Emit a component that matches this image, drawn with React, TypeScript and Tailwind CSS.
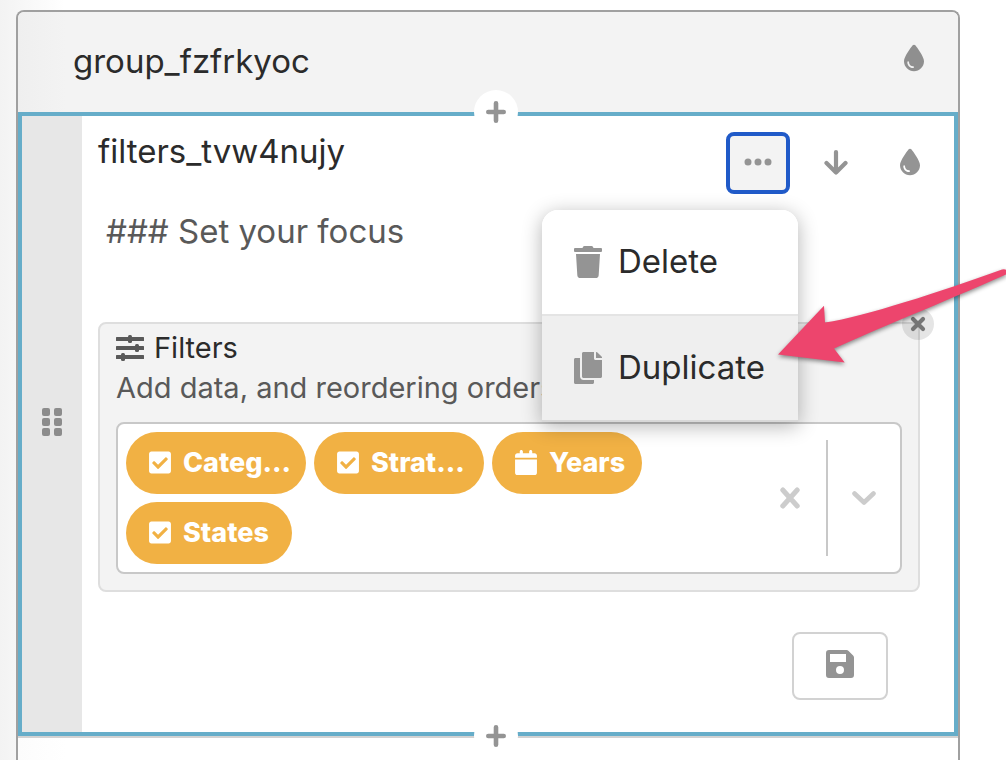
import type { ReactNode } from "react";
import { FaCalendar, FaDroplet, FaEllipsis, FaFloppyDisk } from "react-icons/fa6";
import { FaCheckSquare, FaCopy, FaTrash } from "react-icons/fa";

const tags = [
  { label: "Categ...", kind: "check", width: "w-[180px]" },
  { label: "Strat...", kind: "check", width: "w-[170px]" },
  { label: "Years", kind: "date", width: "w-[150px]" },
  { label: "States", kind: "check", width: "w-[166px]" },
];

function StrokeIcon({ width, height, stroke, d }: { width: number; height: number; stroke: number; d: string }) {
  return (
    <svg
      width={width}
      height={height}
      viewBox={`0 0 ${width} ${height}`}
      fill="none"
      stroke="currentColor"
      strokeWidth={stroke}
      strokeLinecap="round"
      strokeLinejoin="round"
      aria-hidden="true"
    >
      <path d={d} />
    </svg>
  );
}

function SlidersIcon() {
  return (
    <svg width="28" height="26" viewBox="0 0 28 26" fill="#595959" aria-hidden="true">
      <rect x="0" y="2" width="28" height="4" rx="0.5" />
      <rect x="0" y="11" width="28" height="4" rx="0.5" />
      <rect x="0" y="20" width="28" height="4" rx="0.5" />
      <rect x="12" y="0" width="4" height="8" rx="1.5" />
      <rect x="19" y="9" width="4" height="8" rx="1.5" />
      <rect x="5" y="18" width="4" height="8" rx="1.5" />
    </svg>
  );
}

function GripIcon() {
  return (
    <svg width="20" height="28" viewBox="0 0 20 28" fill="#8c8c8c" aria-hidden="true">
      {[0, 10, 20].map((y) => (
        <g key={y}>
          <rect x="0" y={y} width="8" height="8" rx="2" />
          <rect x="12" y={y} width="8" height="8" rx="2" />
        </g>
      ))}
    </svg>
  );
}

function AddButton({ place }: { place: string }) {
  return (
    <button
      type="button"
      aria-label="Add item"
      className={`absolute left-[452px] flex size-11 items-center justify-center rounded-full bg-white text-[#949494] ${place}`}
    >
      <StrokeIcon width={20} height={22} stroke={4.6} d="M10 2.300V19.700M2.300 11H17.700" />
    </button>
  );
}

function MenuItem({ icon, label, className }: { icon: ReactNode; label: string; className: string }) {
  return (
    <button
      type="button"
      role="menuitem"
      className={`flex h-[106px] w-full items-center gap-4 border-b-2 pl-8 text-[#949494] ${className}`}
    >
      {icon}
      <span className="pb-0.5 text-[33px] leading-10 text-[#2b2b2b]">{label}</span>
    </button>
  );
}

export default function App() {
  return (
    <div className="relative flex min-h-screen flex-col overflow-hidden bg-white bg-[linear-gradient(to_right,#f3f3f3,#ffffff_64px)] pt-2.5 font-['Inter',sans-serif] text-[#2b2b2b]">
      <main className="mr-[46px] ml-4 flex grow flex-col rounded-t-lg border-2 border-b-0 border-[#a0a0a0]">
        <header className="flex h-[100px] items-center justify-between rounded-t-md bg-[linear-gradient(to_right,#efefef,#f3f3f3_48px)] pr-[34px] pl-[55px]">
          <h1 className="pb-0.5 text-[33px] leading-10">group_fzfrkyoc</h1>
          <button type="button" aria-label="Group style" className="pb-2 text-[#8f8f8f]">
            <FaDroplet size={28} className="w-5" />
          </button>
        </header>

        <section className="relative flex border-4 border-[#66adc9] bg-white shadow-[0_2px_0_#d2d2d2]">
          <AddButton place="-top-[26px]" />
          <AddButton place="-bottom-[26px]" />
          <button
            type="button"
            aria-label="Drag to reorder"
            className="flex w-[60px] shrink-0 items-center justify-center bg-[#e7e7e7] pb-1"
          >
            <GripIcon />
          </button>

          <div className="min-w-0 grow px-4 pt-4 pb-8">
            <div className="flex items-start justify-between">
              <h2 className="text-[33px] leading-[38px]">filters_tvw4nujy</h2>
              <div className="flex items-center text-[#949494]">
                <div className="relative">
                  <button
                    type="button"
                    aria-label="More actions"
                    aria-haspopup="menu"
                    className="flex h-[62px] w-16 items-center justify-center rounded-lg border-4 border-[#205ac8] bg-[#f3f3f3] pb-0.5"
                  >
                    <FaEllipsis size={32} />
                  </button>
                  <div
                    role="menu"
                    className="absolute top-full -right-2 z-20 mt-4 w-64 rounded-t-2xl bg-white shadow-[0_4px_20px_rgba(0,0,0,0.3)]"
                  >
                    <MenuItem icon={<FaTrash size={32} className="w-7" />} label="Delete" className="rounded-t-2xl border-[#e4e4e4] bg-white" />
                    <MenuItem icon={<FaCopy size={32} className="w-7" />} label="Duplicate" className="border-[#d8d8d8] bg-[#efefef]" />
                  </div>
                </div>
                <button type="button" aria-label="Move down" className="ml-8 flex w-7 justify-center pb-0.5">
                  <StrokeIcon width={24} height={25} stroke={4.2} d="M12 2.100V22.500M2.500 13L12 22.500L21.500 13" />
                </button>
                <button type="button" aria-label="Filter style" className="mr-[18px] ml-[50px] pb-0.5">
                  <FaDroplet size={28} className="w-5" />
                </button>
              </div>
            </div>

            <textarea
              aria-label="Description"
              defaultValue="### Set your focus"
              className="mt-4 block h-28 w-full resize-none bg-transparent px-2 pt-px text-[33px] leading-10 text-[#595959] outline-none"
            />

            <div className="relative mr-[18px] rounded-lg border-2 border-[#dedede] bg-[#f3f3f3] px-4 pt-1 pb-4">
              <button
                type="button"
                aria-label="Remove filters"
                className="absolute -top-4 -right-4 flex size-8 items-center justify-center rounded-full bg-black/10 text-[#757575]"
              >
                <StrokeIcon width={16} height={16} stroke={4.2} d="M3 3L13 13M13 3L3 13" />
              </button>
              <h3 className="flex items-center gap-2.5 text-[29px] leading-10">
                <SlidersIcon />
                Filters
              </h3>
              <p className="text-[29px] leading-10 text-[#595959]">Add data, and reordering orders</p>

              <div className="mt-3.5 flex rounded-lg border-2 border-[#c8c8c8] bg-white">
                <ul className="flex grow flex-wrap gap-2 p-2">
                  {tags.map((tag) => (
                    <li
                      key={tag.label}
                      className={`flex h-[62px] items-center gap-3 rounded-full bg-[#f1b144] pl-[23px] text-[27px] leading-10 font-extrabold text-white ${tag.width}`}
                    >
                      {tag.kind === "check" ? <FaCheckSquare size={25} className="mb-0.5 w-[22px]" /> : <FaCalendar size={25} className="mb-0.5 w-[22px]" />}
                      {tag.label}
                    </li>
                  ))}
                </ul>
                <div className="flex shrink-0 items-stretch text-[#cccccc]">
                  <button type="button" aria-label="Clear all" className="px-[26px]">
                    <StrokeIcon width={20} height={22} stroke={5} d="M2.800 3L17.200 19M17.200 3L2.800 19" />
                  </button>
                  <span className="my-4 w-0.5 bg-[#c8c8c8]" />
                  <button type="button" aria-label="Open options" className="px-6">
                    <StrokeIcon width={24} height={14} stroke={4.6} d="M2.500 2.500L12 11.500L21.500 2.500" />
                  </button>
                </div>
              </div>
            </div>

            <div className="mt-10 mr-[50px] flex justify-end">
              <button
                type="button"
                aria-label="Save"
                className="flex h-[68px] w-24 items-center justify-center rounded-lg border-2 border-[#d2d2d2] bg-white pb-1 text-[#949494]"
              >
                <svg width="28" height="28" viewBox="0 0 28 28" aria-hidden="true">
                  <path
                    fill="currentColor"
                    fillRule="evenodd"
                    d="M3 0H20.500Q21.700 0 22.600 .9L27.100 5.400Q28 6.300 28 7.500V25Q28 28 25 28H3Q0 28 0 25V3Q0 0 3 0ZM4 4V12H20V4ZM14 16A4 4 0 1 0 14 24A4 4 0 1 0 14 16Z"
                  />
                </svg>
              </button>
            </div>
          </div>
        </section>
        <div className="grow bg-[linear-gradient(to_right,#fcfcfc,#ffffff_48px)]" />
      </main>

      <svg
        className="pointer-events-none absolute top-[262px] right-0 z-30 drop-shadow-[0_2px_2px_rgba(0,0,0,0.45)]"
        width="232"
        height="108"
        viewBox="0 0 232 108"
        aria-hidden="true"
      >
        <path
          d="M4 92.5 L50 43.7 L51 60.5 C92 54 165 30 228 7.4 Q232 6.500 233 9 L233 12 C165 42 105 66 60 86.500 L70.700 100.500 Z"
          fill="#ed456d"
        />
      </svg>
    </div>
  );
}
